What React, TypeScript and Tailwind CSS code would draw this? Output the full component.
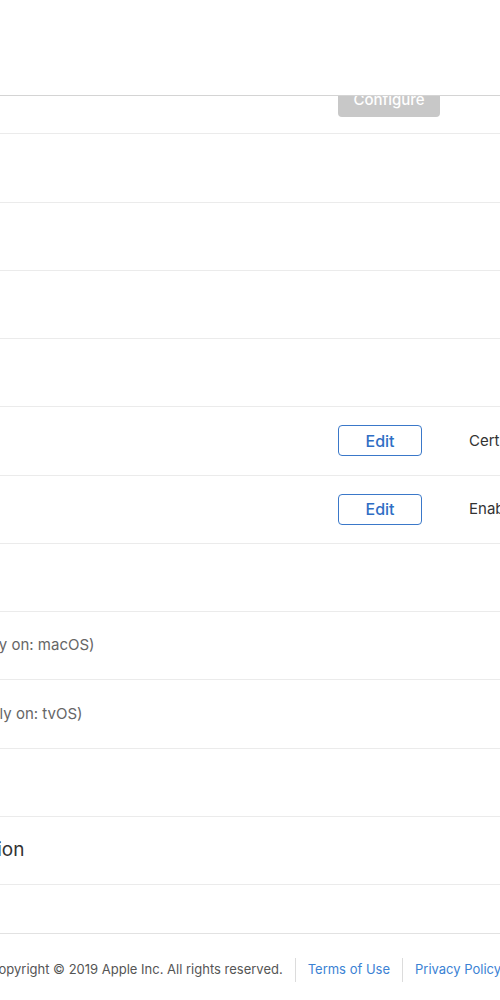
const rows: { label: string; big?: boolean; action?: "configure" | "edit"; note?: string }[] = [
  { label: "iCloud", action: "configure" },
  { label: "In-App Purchase" },
  { label: "Inter-App Audio" },
  { label: "Multipath" },
  { label: "Network Extensions" },
  { label: "Push Notifications", action: "edit", note: "Certificates (0)" },
  { label: "Sign In with Apple", action: "edit", note: "Enable as a primary App ID" },
  { label: "SiriKit" },
  { label: "System Extension (available only on: macOS)" },
  { label: "User Management (available only on: tvOS)" },
  { label: "Wallet" },
  { label: "Wireless Accessory Configuration", big: true },
];

function Row({ row }: { row: (typeof rows)[number] }) {
  return (
    <div className="flex h-[68.25px] items-center border-b border-[#ebebeb]">
      <div className="w-[563px] shrink-0">
        <span
          className={
            row.big
              ? "-ml-[56px] block whitespace-nowrap text-[19px] text-[#333]"
              : "block whitespace-nowrap text-[15px] text-[#666]"
          }
        >
          {row.label}
        </span>
      </div>
      <div className="w-[131px] shrink-0">
        {row.action === "configure" && (
          <button className="mt-[2px] h-[33px] w-[102px] rounded-[4px] bg-[#c8c8c8] text-[15px] font-medium text-white">
            Configure
          </button>
        )}
        {row.action === "edit" && (
          <button className="h-[31px] w-[84px] rounded-[4px] border border-[#3a78c9] bg-white text-[16px] font-medium text-[#2f6ec4]">
            Edit
          </button>
        )}
      </div>
      <div className="whitespace-nowrap text-[15px] text-[#333]">{row.note}</div>
    </div>
  );
}

export default function App() {
  return (
    <div className="relative h-[1000px] w-[500px] overflow-hidden bg-white font-['Inter',sans-serif]">
      <header className="absolute inset-x-0 top-0 z-10 h-[96px] border-b border-[#d4d4d4] bg-white" />

      <div className="pt-[66px]">
        <div className="-ml-[225px] w-[1100px]">
          {rows.map((row) => (
            <Row key={row.label} row={row} />
          ))}
        </div>
      </div>

      <footer className="mt-[48px] border-t border-[#e2e2e2]">
        <div className="-ml-[11px] flex h-[72px] w-[700px] items-center text-[13px]">
          <span className="whitespace-nowrap text-[#555]">
            Copyright © 2019 Apple Inc. All rights reserved.
          </span>
          <span className="mx-[12px] h-[24px] w-px bg-[#dcdcdc]" />
          <a className="whitespace-nowrap text-[#3b82d4]">Terms of Use</a>
          <span className="mx-[12px] h-[24px] w-px bg-[#dcdcdc]" />
          <a className="whitespace-nowrap text-[#3b82d4]">Privacy Policy</a>
        </div>
      </footer>
    </div>
  );
}
